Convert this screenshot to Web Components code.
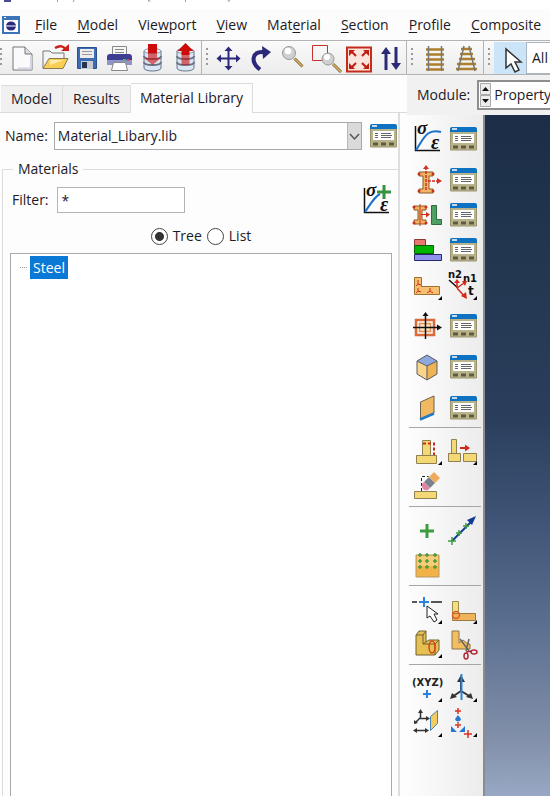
<!DOCTYPE html>
<html lang="en">
<head>
	<meta charset="utf-8">
	<title>Material Library</title>
	<style>
		body {margin:0; background:#fdfdfd; color:#1c1a26; font:14px/20px "Open Sans", "Noto Sans", sans-serif;}
	</style>

	<template id="app-window">
		<style>
			:host {display:flex; flex-direction:column; min-height:100vh; overflow:hidden;}
			.work {flex:1; display:grid; grid-template-columns:minmax(0,74fr) minmax(0,26fr);}
			.side {display:flex; flex-direction:column; min-width:0;}
			.main {display:flex; flex-direction:column; min-width:0;}
			.canvas {flex:1; display:flex;}
			.view {flex:1; border-left:2px solid #8b8b90; background:linear-gradient(#1b2d47 0, #22364f 20%, #2b3f5d 45%, #405577 60%, #5b6f90 75%, #8290aa 92%, #98a8c4 100%);}
		</style>
		<slot name="top"></slot>
		<div class="work">
			<div class="side"><slot name="side"></slot></div>
			<div class="main">
				<slot name="module"></slot>
				<div class="canvas"><slot name="tools"></slot><div class="view"></div></div>
			</div>
		</div>
	</template>

	<template id="title-strip">
		<style>
			:host {display:block; height:9px; background:#fff;}
			svg {display:block;}
		</style>
		<svg width="240" height="9" viewBox="0 0 240 9" fill="none" stroke="#9a9aa0">
			<path d="M4 0h7v2h-7z" fill="#4a4a96" stroke="none"/>
			<path d="M57.500 0v2M73 2l1-2M148.500 0v1h2M185.500 0v2M229.500 0v1h-2"/>
		</svg>
	</template>

	<template id="menu-bar">
		<style>
			:host {display:flex; align-items:center; height:31px; padding-left:2px; background:#fcfcfc;}
			svg {flex:none; margin-right:5px;}
		</style>
		<svg width="18" height="18" viewBox="0 0 18 18">
			<path d="M1 1h16v16H1z" fill="#fff" stroke="#3a73b8" stroke-width="2"/>
			<path d="M0 0h18v4H0z" fill="#3a73b8"/><path d="M2 1h2v1H2z" fill="#fff"/>
			<ellipse cx="9" cy="10" rx="5" ry="4.500" fill="#2a2a7c"/><path d="M2 9.500h14v1H2z" fill="#fff"/>
		</svg>
		<slot></slot>
	</template>

	<template id="menu-item">
		<style>
			:host {display:block; flex:none;}
			button {font:inherit; color:inherit; border:0; background:none; padding:0 10px;}
			::slotted(u) {text-underline-offset:2px;}
		</style>
		<button type="button"><slot></slot></button>
	</template>

	<template id="tool-bar">
		<style>
			:host {display:flex; height:33px; border:solid #b4b4b4; border-width:1px 0; background:linear-gradient(#fafafa,#ececec); overflow:hidden;}
		</style>
		<slot></slot>
	</template>

	<template id="tool-group">
		<style>
			:host {display:flex; flex:none; align-items:center; padding-right:2px; border-left:1px solid #b4b4b4;}
			:host(:first-of-type) {border-left:0;}
			.grip {width:2px; height:20px; margin:0 4px; background:repeating-linear-gradient(#9a9a9a 0 2px, transparent 2px 5px);}
			:host(:first-of-type) .grip {margin:0 5px 0 0;}
		</style>
		<span class="grip"></span><slot></slot>
	</template>

	<template id="tool-button">
		<style>
			:host {display:block; flex:none;}
			:host([selected]) button {background:#cce4f7;}
			button {display:flex; align-items:center; justify-content:center; width:100%; height:100%; padding:0; border:0; background:none; font:inherit;}
			svg {display:block; overflow:visible;}
		</style>
		<button type="button"></button>
	</template>

	<template id="tab-strip">
		<style>
			:host {display:flex; align-items:flex-end; height:37px; padding-left:1px; border-bottom:1px solid #dcdcdc;}
		</style>
		<slot></slot>
	</template>

	<template id="tab-item">
		<style>
			:host {display:block; flex:none;}
			button {display:block; font:inherit; color:inherit; height:27px; padding:0 10px; border:solid #dcdcdc; border-width:1px 1px 0 0; background:#f0f0f0;}
			:host([selected]) {margin-bottom:-1px;}
			:host([selected]) button {height:30px; background:#fdfdfd; padding:0 9px 2px;}
		</style>
		<button type="button" role="tab"><slot></slot></button>
	</template>

	<template id="library-panel">
		<style>
			:host {flex:1; display:flex; flex-direction:column; margin-right:7px; border-right:2px solid #dedede;}
			.row {display:flex; align-items:center;}
			.name {padding:8px 0 0 5px; gap:6px;}
			.wrap {position:relative; display:flex; flex:1; min-width:0;}
			select {flex:1; min-width:0; height:28px; padding:0 20px 0 3px; border:1px solid #a8a8ae; border-radius:0; background:#fff; appearance:none; font:inherit; color:inherit;}
			.arrow {position:absolute; top:1px; right:1px; width:13px; height:26px; background:#dadada; border-left:1px solid #b8b8b8; pointer-events:none;}
			fieldset {flex:1; display:flex; flex-direction:column; min-width:0; margin:8px 0 0 2px; padding:0 6px 0 7px; border:solid #dcdcdc; border-width:1px 0 0 1px;}
			legend {margin-left:3px; padding:0 5px;}
			.filter {gap:8px; margin-top:6px;}
			.filter label {margin-left:2px;}
			.filter tool-button {margin-left:auto;}
			input[type=text] {box-sizing:border-box; width:128px; height:26px; padding:0 4px; border:1px solid #b4b4b8; background:#fff; font:inherit; color:inherit;}
			.kind {justify-content:center; gap:5px; margin:11px 0 7px;}
			.kind label {display:flex; align-items:center; gap:5px;}
			input[type=radio] {appearance:none; box-sizing:border-box; width:17px; height:17px; margin:0; border:1px solid #444; border-radius:50%; background:#fff;}
			input[type=radio]:checked {background:radial-gradient(#333 0 4px, #fff 5px);}
			.tree {flex:1; border:solid #a8a8b0; border-width:1px 1px 0; background:#fff; padding:2px 0 0 9px;}
		</style>
		<div class="row name">
			<label for="name">Name:</label>
			<span class="wrap">
				<select id="name"><option>Material_Libary.lib</option></select>
				<svg class="arrow" viewBox="0 0 13 26"><path d="M2 11l4.500 5L11 11" fill="none" stroke="#555" stroke-width="1.500"/></svg>
			</span>
			<tool-button icon="manager" label="Library manager"></tool-button>
		</div>
		<fieldset>
			<legend>Materials</legend>
			<div class="row filter">
				<label for="filter">Filter:</label>
				<input type="text" id="filter" value="*">
				<tool-button icon="addMaterial" label="Add material"></tool-button>
			</div>
			<div class="row kind">
				<label><input type="radio" name="kind" checked>Tree</label>
				<label><input type="radio" name="kind">List</label>
			</div>
			<div class="tree" role="tree"><slot></slot></div>
		</fieldset>
	</template>

	<template id="tree-node">
		<style>
			:host {display:flex; align-items:center; gap:3px;}
			i {width:7px; border-top:1px dotted #999;}
			span {padding:2px 3px 1px; line-height:20px; background:#0a78d7; color:#fff;}
		</style>
		<i></i><span role="treeitem" aria-selected="true"><slot></slot></span>
	</template>

	<template id="module-bar">
		<style>
			:host {display:flex; align-items:flex-start; gap:7px; height:35px; padding:5px 0 0 10px; background:#f1f1f1; overflow:hidden;}
			label {flex:none; padding-top:5px;}
			.wrap {position:relative; flex:1 0 100px; display:flex;}
			select {flex:1; height:30px; padding:0 0 0 15px; border:2px solid #8e8e8e; border-radius:0; background:#fff; appearance:none; font:inherit; color:inherit;}
			svg {position:absolute; left:3px; top:3px; pointer-events:none;}
		</style>
		<label for="module">Module:</label>
		<span class="wrap">
			<select id="module"><option>Property</option></select>
			<svg width="11" height="24" viewBox="0 0 11 24"><path d="M.5 .5h10v11H.5zM.5 12.500h10v11H.5z" fill="#ececec" stroke="#aaa"/><path d="M2 8l3.500-4L9 8zM2 16l3.500 4L9 16z" fill="#111"/></svg>
		</span>
	</template>

	<template id="tool-box">
		<style>
			:host {display:block; flex:none; width:76px; background:linear-gradient(90deg,#fdfdfd,#ececec);}
		</style>
		<slot></slot>
	</template>

	<template id="tool-section">
		<style>
			:host {display:grid; grid-template-columns:36px 36px; grid-auto-rows:auto; margin:0 2px; padding:6px 0 2px; border-bottom:1px solid #a6a6a6;}
			:host(:last-of-type) {border-bottom:0;}
			::slotted(tool-button) {height:35px;}
			::slotted(.gap2) {margin-top:2px;}
			::slotted(.gap4) {margin-top:4px;}
			::slotted(.gap6) {margin-top:6px;}
		</style>
		<slot></slot>
	</template>
</head>
<body>

<app-window>
	<title-strip slot="top"></title-strip>
	<menu-bar slot="top">
		<menu-item><u>F</u>ile</menu-item>
		<menu-item><u>M</u>odel</menu-item>
		<menu-item>Vie<u>w</u>port</menu-item>
		<menu-item><u>V</u>iew</menu-item>
		<menu-item>Mat<u>e</u>rial</menu-item>
		<menu-item><u>S</u>ection</menu-item>
		<menu-item><u>P</u>rofile</menu-item>
		<menu-item><u>C</u>omposite</menu-item>
	</menu-bar>
	<tool-bar slot="top">
		<tool-group>
			<tool-button icon="newFile" label="New"></tool-button>
			<tool-button icon="open" label="Open"></tool-button>
			<tool-button icon="save" label="Save"></tool-button>
			<tool-button icon="print" label="Print"></tool-button>
			<tool-button icon="dbIn" label="Import"></tool-button>
			<tool-button icon="dbOut" label="Export"></tool-button>
		</tool-group>
		<tool-group>
			<tool-button icon="pan" label="Pan"></tool-button>
			<tool-button icon="rotate" label="Rotate"></tool-button>
			<tool-button icon="magnify" label="Magnify"></tool-button>
			<tool-button icon="boxZoom" label="Box zoom"></tool-button>
			<tool-button icon="fit" label="Fit view"></tool-button>
			<tool-button icon="cycle" label="Cycle views"></tool-button>
		</tool-group>
		<tool-group>
			<tool-button icon="parallel" label="Perspective off"></tool-button>
			<tool-button icon="perspective" label="Perspective on"></tool-button>
		</tool-group>
		<tool-group>
			<tool-button icon="select" label="Select" selected></tool-button>
			<filter-select></filter-select>
		</tool-group>
	</tool-bar>

	<tab-strip slot="side">
		<tab-item>Model</tab-item>
		<tab-item>Results</tab-item>
		<tab-item selected>Material Library</tab-item>
	</tab-strip>
	<library-panel slot="side">
		<tree-node>Steel</tree-node>
	</library-panel>

	<module-bar slot="module"></module-bar>
	<tool-box slot="tools">
		<tool-section>
			<tool-button icon="material" label="Create material"></tool-button>
			<tool-button icon="manager" label="Material manager"></tool-button>
			<tool-button class="gap6" icon="section" label="Create section"></tool-button>
			<tool-button class="gap6" icon="manager" label="Section manager"></tool-button>
			<tool-button icon="assign" label="Assign section"></tool-button>
			<tool-button icon="manager" label="Assignment manager"></tool-button>
			<tool-button icon="layup" label="Create composite layup"></tool-button>
			<tool-button icon="manager" label="Layup manager"></tool-button>
			<tool-button class="gap2" icon="orient" label="Assign orientation"></tool-button>
			<tool-button class="gap2" icon="normals" label="Assign normals"></tool-button>
			<tool-button class="gap4" icon="profile" label="Create profile"></tool-button>
			<tool-button class="gap4" icon="manager" label="Profile manager"></tool-button>
			<tool-button class="gap6" icon="skin" label="Create skin"></tool-button>
			<tool-button class="gap6" icon="manager" label="Skin manager"></tool-button>
			<tool-button class="gap6" icon="stringer" label="Create stringer"></tool-button>
			<tool-button class="gap6" icon="manager" label="Stringer manager"></tool-button>
		</tool-section>
		<tool-section>
			<tool-button icon="extend" label="Extend faces"></tool-button>
			<tool-button icon="offset" label="Offset faces"></tool-button>
			<tool-button icon="erase" label="Remove faces"></tool-button>
		</tool-section>
		<tool-section>
			<tool-button icon="point" label="Attachment point"></tool-button>
			<tool-button icon="pointLine" label="Points along direction"></tool-button>
			<tool-button icon="pointGrid" label="Point pattern"></tool-button>
		</tool-section>
		<tool-section>
			<tool-button icon="splitEdge" label="Partition edge"></tool-button>
			<tool-button icon="splitFace" label="Partition face"></tool-button>
			<tool-button icon="splitCell" label="Partition cell"></tool-button>
			<tool-button icon="cut" label="Cut"></tool-button>
		</tool-section>
		<tool-section>
			<tool-button icon="datumPoint" label="Datum point"></tool-button>
			<tool-button icon="datumAxis" label="Datum axis"></tool-button>
			<tool-button icon="datumPlane" label="Datum plane"></tool-button>
			<tool-button icon="datumCsys" label="Datum coordinate system"></tool-button>
		</tool-section>
	</tool-box>
</app-window>

<script>
	// small corner triangle on tools that open a flyout
	const more = (x, y) => `<path d="M${x + 4} ${y}v4h-4z" fill="#000"/>`;
	const plus = (x, y, r, color, w = 1.5) => `<path d="M${x - r} ${y}h${2 * r}M${x} ${y - r}v${2 * r}" stroke="${color}" stroke-width="${w}"/>`;
	const lens = (x, y, r) => `<path d="M${x + r - 1} ${y + r - 1}l8 8" stroke="#7a6230" stroke-width="3"/><path d="M${x + r - 1} ${y + r - 1}l8 8" stroke="#d8b468" stroke-width="1.5"/>
		<circle cx="${x}" cy="${y}" r="${r}" fill="#d0d0d0" stroke="#999"/><circle cx="${x - 1}" cy="${y - 2}" r="${r / 2}" fill="#fff"/>`;
	const disks = x => `<path d="M${x} 9v17c0 4 17 4 17 0V9" fill="#dbe6f4" stroke="#667488"/><path d="M${x} 14c0 4 17 4 17 0M${x} 20c0 4 17 4 17 0" fill="none" stroke="#667488" stroke-width="2"/><ellipse cx="${x + 8.5}" cy="9" rx="8.500" ry="2.500" fill="#eef2f8" stroke="#8793a5"/>`;
	const greek = (sx, sy, ex, ey) => `<g font-family="Liberation Serif, serif" font-style="italic" font-weight="bold" fill="#111"><text x="${sx}" y="${sy}" font-size="19">σ</text><text x="${ex}" y="${ey}" font-size="20">ε</text></g>`;

	// icons for the top bar are drawn on a 32px grid
	const BAR = {
		newFile: `<path d="M6 5h12l7 7v16H6z" fill="#fafafc" stroke="#777"/><path d="M18 5v7h7" fill="#ddd" stroke="#777"/><path d="M11 26.500h13V14" fill="none" stroke="#d4d4e0" stroke-width="2"/>`,
		open: `<path d="M4 26V9h7l2 2h12v6" fill="#f4f4f4" stroke="#777"/><path d="M4 26.500l6-10h19l-5 10z" fill="#f8cf52" stroke="#8a7a50"/><path d="M11 18h14l-14 5z" fill="#fdeaa8"/><path d="M16 6c5-3 9-2 11 2" fill="none" stroke="#c8201c" stroke-width="2.500"/><path d="M22 9h8V2z" fill="#c8201c"/>`,
		save: `<path d="M6.500 5.500h19v21h-19z" fill="#3d6cb0" stroke="#2c518c"/><path d="M9 7h14v9H9z" fill="#ececec"/><path d="M11 9.500h10M11 12.500h10" stroke="#999"/><path d="M10 19h12v8H10z" fill="#c8ccd4"/><path d="M11 20h5v6h-5z" fill="#26344e"/>`,
		print: `<path d="M9.500 4.500h14v8h-14z" fill="#f6f6f6" stroke="#888"/><path d="M12 7.500h9M12 10.500h9" stroke="#888"/><path d="M4 15q0-3 3-3h19q3 0 3 3v8H4z" fill="#3e3f92"/><path d="M4 18h25v5H4z" fill="#9094c6"/><path d="M20 17h3v2h-3z" fill="#46b868"/><path d="M24 17h2v2h-2z" fill="#d8504a"/><path d="M10.500 20.500h12l2 8h-16z" fill="#fff" stroke="#888"/>`,
		dbIn: disks(9) + `<path d="M13 2h9v9h-9z" fill="#cc0b0b"/><path d="M13 11h9v5h4l-8.500 7L9 16h4z" fill="#cc0b0b" opacity=".6"/>`,
		dbOut: disks(10) + `<path d="M18.500 1l8 8h-4v4h-8V9h-4z" fill="#cc0b0b"/><path d="M14.500 13h8v10h-8z" fill="#cc0b0b" opacity=".6"/>`,
		pan: `<path d="M16.500 7v20M6 16.500h21" stroke="#2a2a78" stroke-width="2"/><path d="M12.500 9l4-4.500 4 4.500zM12.500 24l4 4.500 4-4.500zM9 12.500l-4.500 4 4.500 4zM24 12.500l4.500 4-4.500 4z" fill="#2a2a78"/>`,
		rotate: `<path d="M16 27.500C6 20 8 9 20 10" fill="none" stroke="#2a2a78" stroke-width="4"/><path d="M18 4l9 6-8 7z" fill="#2a2a78"/>`,
		magnify: lens(13, 11, 6.5),
		boxZoom: `<path d="M4.500 3.500h15v15h-15z" fill="none" stroke="#c8302a"/>` + lens(20, 17, 6),
		fit: `<path d="M7 5.500h24v24H7z" fill="#fbe4dc" stroke="#c42c1c" stroke-width="2"/><g stroke="#c01c10" stroke-width="2"><path d="M11 9l5 5M27 9l-5 5M11 26l5-5M27 26l-5-5"/></g><path d="M9 8h6l-6 6zM29 8v6l-6-6zM9 27v-6l6 6zM29 27h-6l6-6z" fill="#c01c10"/>`,
		cycle: `<path d="M14 28V9M24 5v19" stroke="#2a2a78" stroke-width="3"/><path d="M9 12l5-7 5 7zM19 21l5 7 5-7z" fill="#2a2a78"/>`,
		parallel: `<path d="M9 7.500h18M9 12.500h18M9 17.500h18M9 22.500h18M9 27.500h18" stroke="#ac7f2c" stroke-width="2.500"/><path d="M11.500 4v25M24.500 4v25" stroke="#777" stroke-width="1.500"/>`,
		perspective: `<path d="M12 7h11M11 12h13M10 17h16M8 22h19M7 27h21" stroke="#ac7f2c" stroke-width="2.500"/><path d="M15 4L9 29M20 4l6 25" stroke="#777" stroke-width="1.500"/>`,
		select: `<path d="M12 7v19l5-4 4 8 4-2-4-8h6z" fill="#fff" stroke="#333" stroke-width="1.500"/>`
	};

	// toolbox icons are drawn on a 30px grid
	const BOX = {
		manager: `<path d="M2.500 5h26v21h-26z" fill="#b9b38c" stroke="#99946e"/><path d="M2 8V5q0-2 2-2h23q2 0 2 2v3z" fill="#0d72c2"/><path d="M4 5h5" stroke="#fff" stroke-width="1.500"/><path d="M5 10h21v9H5z" fill="#fff"/><path d="M7 12.500h3M7 14.500h3M7 16.500h3M13 12.500h10M13 14.500h11M13 16.500h10" stroke="#666"/><path d="M5 21.500h5v3H5zM13 21.500h5v3h-5zM21 21.500h5v3h-5z" fill="#5f5b3c"/>`,
		addMaterial: `<path d="M2.500 3v24.500H27" fill="none" stroke="#111" stroke-width="1.500"/><path d="M3 27C8 20 12 12 18 9" fill="none" stroke="#1a72cc" stroke-width="2"/>` + greek(4, 11, 18, 26) + plus(22, 7, 7, "#37923c", 3),
		material: `<path d="M3.500 2v24.500H28" fill="none" stroke="#111" stroke-width="1.500"/><path d="M4 26C12 14 15 4 29 8" fill="none" stroke="#1a72cc" stroke-width="2"/>` + greek(5, 10, 19, 25),
		section: `<path d="M7 7h14v4h-4v13h4v4H7v-4h4V11H7z" fill="#f3b264" stroke="#8d5a22"/><path d="M14 25V3M16 16h10" stroke="#d03020" stroke-width="1.500" stroke-dasharray="3 1"/><path d="M11 4l3-4 3 4zM25 13l5 3-5 3z" fill="#d03020"/><g fill="#c8301c"><circle cx="7" cy="9" r="1.500"/><circle cx="21" cy="9" r="1.500"/><circle cx="7" cy="26" r="1.500"/><circle cx="21" cy="26" r="1.500"/></g>`,
		assign: `<path d="M2 6h12v4h-4v10h4v4H2v-4h4V10H2z" fill="#f3b264" stroke="#8d5a22"/><path d="M8 4v22M9 14.500h6" stroke="#d03020"/><path d="M14 12l4 2.500-4 3z" fill="#d03020"/><g fill="#c8301c"><circle cx="2" cy="7" r="1.500"/><circle cx="14" cy="7" r="1.500"/><circle cx="2" cy="23" r="1.500"/><circle cx="14" cy="23" r="1.500"/></g><path d="M19.500 5.500h5v14h5v5h-10z" fill="#4fa064" stroke="#2e6c42"/>`,
		layup: `<path d="M2.500 4.500h11v6h-11z" fill="#e87870" stroke="#8e3a34"/><path d="M2.500 10.500h19v8h-19z" fill="#00b400" stroke="#056005"/><path d="M2.500 19.500h27v6h-27z" fill="#9090ee" stroke="#28286c"/>`,
		orient: `<path d="M2.500 5.500h7v9h18v8h-25z" fill="#f6c070" stroke="#a07030"/><path d="M6 8v4l-2 2M6 12l3 1M6 16v3l-2 2M6 19l3 1M18 16v3l-3 2M18 19l3 2" fill="none" stroke="#d03020"/>` + more(26, 24),
		normals: `<g font-family="DejaVu Sans, sans-serif" font-weight="bold" font-size="10" fill="#111"><text x="0" y="6">n2</text><text x="15" y="10">n1</text><text x="20" y="23" font-size="12">t</text></g><path d="M1 8l9 8" stroke="#111" stroke-width="1.500"/><path d="M9 16V9M9 16l7-5M9 16l8 9" stroke="#d82818" stroke-width="1.500"/><path d="M6 11l3-4 3 4zM14 9l5 0-2 5zM13 24l5-4 1 7z" fill="#d82818"/>` + more(25, 24),
		profile: `<path d="M4 9h18v15H4z" fill="none" stroke="#d86a3a" stroke-width="2.500"/><path d="M7.500 12.500h11v8h-11z" fill="#fde6c0" stroke="#e09050" stroke-width="1.500"/><path d="M13.500 3v25M1 16.500h26" stroke="#111" stroke-width="1.500"/><path d="M10.500 5l3-4 3 4zM25 13.500l5 3-5 3z" fill="#111"/>`,
		skin: `<path d="M15 3l10 6-10 5L5 9z" fill="#8ca8dc"/><path d="M5 9l10 5v14L5 22z" fill="#fbd48a"/><path d="M25 9l-10 5v14l10-6z" fill="#eeb454"/><path d="M15 3l10 6v13l-10 6-10-6V9zM5 9l10 5 10-5M15 14v14" fill="none" stroke="#5a5a64"/>`,
		stringer: `<path d="M8.500 9L22 3v17L8.500 26z" fill="#f0b860" stroke="#6e6248"/><path d="M8 26.500L22 20.500" stroke="#2478c8" stroke-width="2.500"/>`,
		extend: `<path d="M10.500 3.500h8v15h6v8h-20v-8h6z" fill="#f3d874" stroke="#8f8250"/><path d="M4.500 18.500h20" stroke="#8f8250"/><path d="M11 6.500h11V18" fill="none" stroke="#d02818" stroke-width="2" stroke-dasharray="3 2"/>` + more(26, 24),
		offset: `<path d="M3.500 2.500h5v14h4v8H.500v-8h3zM15.500 16.500h13v8h-13z" fill="#f3d874" stroke="#8f8250"/><path d="M.500 16.500h12" stroke="#8f8250"/><path d="M12 11h6" stroke="#d02818" stroke-width="2"/><path d="M17 7.500l5 3.500-5 3.500z" fill="#d02818"/>` + more(25, 24),
		erase: `<path d="M2.500 19.500h22v7h-22z" fill="#f3d874" stroke="#8f8250"/><path d="M9.500 19V4.500h7" fill="none" stroke="#222" stroke-dasharray="3 2"/><path d="M17 5l6 6-5 5-6-6z" fill="#77828e"/><path d="M12 10l6 6-2 2q-3 1-5-1-2-3-1-5z" fill="#e086a4"/><path d="M17 5l5-5 6 6-5 5z" fill="#efab5c"/>`,
		point: plus(15, 15, 7, "#3c9c40", 3),
		pointLine: `<path d="M4 25L24 5" stroke="#103c98" stroke-width="2"/><path d="M19 4l9-4-4 9z" fill="#103c98"/>` + plus(4, 25, 4, "#3c9c40") + plus(11, 17, 3, "#3c9c40") + plus(18, 10, 3, "#3c9c40"),
		pointGrid: `<path d="M4 4h23v22H4z" fill="#f2b24a" stroke="#b89864"/><path d="M5 5h21v10H5z" fill="#f6cc78"/>` + [4, 10, 16].map(y => [8, 15, 23].map(x => plus(x, y, 2, "#4a9c36")).join("")).join(""),
		splitEdge: `<path d="M0 7h5M19 7h11" stroke="#222" stroke-width="1.500"/>` + plus(12, 7, 5, "#2a82dc", 2) + `<path d="M15 11v12l3-2 4 6 3-2-3-6h4z" fill="#fff" stroke="#222"/>` + more(26, 25),
		splitFace: `<path d="M4.500 6.500h6v12h-6z" fill="#f5df82" stroke="#9d8d50"/><path d="M4.500 18.500h23v7h-23z" fill="#f0b45c" stroke="#9a7a44"/><circle cx="8" cy="20" r="3.500" fill="none" stroke="#e05a20" stroke-width="1.500"/>` + more(25, 25),
		splitCell: `<path d="M4 5l3-4h7v11l3-2h10v10l-4 5H4z" fill="#e6c050" stroke="#6e6234"/><path d="M4 5h7v9h12l4-4M11 5l3-4M11 14l3-2M23 14v11" fill="none" stroke="#6e6234"/><ellipse cx="20" cy="17" rx="3" ry="6" fill="none" stroke="#d84020" stroke-width="1.500"/>` + more(26, 24),
		cut: `<path d="M4 1h7v12l4-3 5 4h2v5H4z" fill="#f3bd62" stroke="#8a7548"/><path d="M12 9l9 12M21 9l-3 12" stroke="#666" stroke-width="1.500"/><g fill="none" stroke="#b02838" stroke-width="1.500"><ellipse cx="18" cy="26" rx="2" ry="3"/><ellipse cx="26" cy="22" rx="3" ry="2"/><path d="M18 22l6-1"/></g>`,
		datumPoint: `<text x="0" y="12" font-family="DejaVu Sans, sans-serif" font-weight="bold" font-size="10" fill="#222">(XYZ)</text>` + plus(15, 20, 4, "#2a82dc", 2) + more(26, 24),
		datumAxis: `<path d="M13 4v13M13 17l-9 6M13 17l10 6" stroke="#333" stroke-width="2"/><path d="M9 8l4-7 4 7zM2 25l2-6 5 4zM25 25l-2-6-5 4z" fill="#333"/><path d="M13.500 0v26" stroke="#2a82dc" stroke-width="2"/>` + more(25, 24),
		datumPlane: `<path d="M8.500 3v6M8 9.500h7M8 9l-5 5M4 21.500h11" stroke="#333" stroke-width="1.500"/><path d="M6 4l2.500-4L11 4zM14 7l4 2.500-4 2.500zM2 15v-4l4 3zM5 19l-4 2.500 4 2.500zM13 19l4 2.500-4 2.500z" fill="#333"/><path d="M18.500 7.500l7-6v13l-7 7z" fill="#f3cc60" stroke="#4886b8"/>` + more(26, 24),
		datumCsys: plus(10, 2, 3, "#dc3020") + plus(10, 16, 3, "#dc3020") + plus(20, 25, 4, "#dc3020") + `<path d="M7 10l3-4 3 4-1 2H8zM3 17v6h6zM17 17v6h-6z" fill="#2478d8"/><path d="M10 12v4" stroke="#999"/>` + more(25, 24)
	};

	class Base extends HTMLElement {
		constructor() {
			super();
			const shadow = this.attachShadow({mode: "open"});
			const template = document.getElementById(this.localName);
			shadow.appendChild(template.content.cloneNode(true));
		}
	}

	class ToolButton extends Base {
		connectedCallback() {
			const name = this.getAttribute("icon");
			const size = name in BAR ? 32 : 30;
			const button = this.shadowRoot.querySelector("button");
			button.setAttribute("aria-label", this.getAttribute("label"));
			button.innerHTML = `<svg width="${size}" height="${size}" viewBox="0 0 ${size} ${size}">${BAR[name] || BOX[name]}</svg>`;
		}
	}

	class FilterSelect extends HTMLElement {
		constructor() {
			super();
			this.attachShadow({mode: "open"}).innerHTML = `
				<style>
					:host {display:block; flex:none;}
					select {display:block; width:80px; height:32px; padding:0 5px; border:1px solid #a8b4c0; border-radius:0; background:#fff; appearance:none; font:inherit; color:inherit;}
				</style>
				<select aria-label="Selection filter"><option>All</option></select>`;
		}
	}

	customElements.define("tool-button", ToolButton);
	customElements.define("filter-select", FilterSelect);
	["title-strip", "menu-bar", "menu-item", "tool-bar", "tool-group", "tab-strip", "tab-item", "tree-node",
		"module-bar", "tool-section", "tool-box", "library-panel", "app-window"]
		.forEach(name => customElements.define(name, class extends Base {}));
</script>

</body>
</html>
